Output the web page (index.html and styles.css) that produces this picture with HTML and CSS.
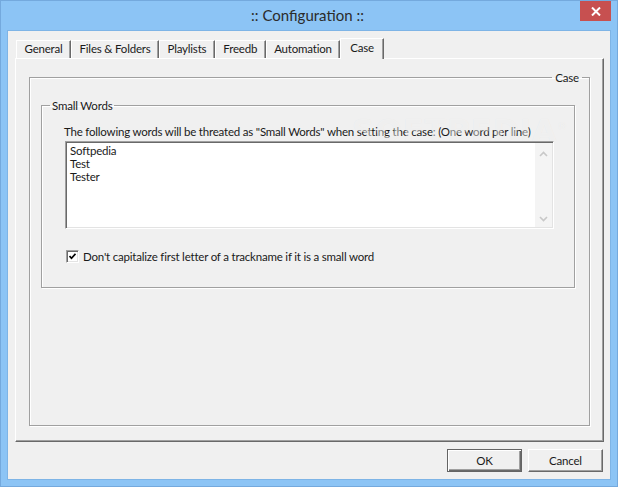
FILE: index.html
```html
<!DOCTYPE html>
<html>
<head>
<meta charset="utf-8">
<title>:: Configuration ::</title>
<link rel="stylesheet" href="styles.css">
</head>
<body>

<div class="window">

	<div class="titlebar">
		<div class="title">:: Configuration ::</div>
		<button type="button" class="close" title="Close">
			<svg width="10" height="9" viewBox="0 0 10 9"><path d="M1 0.5 L9 8.5 M9 0.5 L1 8.5" stroke="#fff" stroke-width="2" fill="none"/></svg>
		</button>
	</div>

	<div class="client">

		<div class="tabs">
			<div class="tab">General</div>
			<div class="tab">Files &amp; Folders</div>
			<div class="tab">Playlists</div>
			<div class="tab">Freedb</div>
			<div class="tab">Automation</div>
			<div class="tab active">Case</div>
		</div>

		<div class="panel">
			<fieldset class="group case_group">
				<legend class="legend_end">Case</legend>
				<div class="case_body">

					<fieldset class="group words_group">
						<legend>Small Words</legend>
						<div class="words_body">
							<p class="hint">The following words will be threated as "Small Words" when setting the case: (One word per line)</p>
							<div class="listbox">
								<textarea id="small_words" spellcheck="false">Softpedia
Test
Tester</textarea>
								<div class="vscroll">
									<svg width="9" height="6" viewBox="0 0 9 6"><path d="M1 5 L4.5 1.5 L8 5" stroke="#c8c8c8" stroke-width="1.6" fill="none"/></svg>
									<svg width="9" height="6" viewBox="0 0 9 6"><path d="M1 1 L4.5 4.5 L8 1" stroke="#c8c8c8" stroke-width="1.6" fill="none"/></svg>
								</div>
							</div>
							<label class="check">
								<span class="box"><svg width="7" height="7" viewBox="0 0 7 7"><path d="M0.5 3 L2.5 5.3 L6.5 0.8" stroke="#000" stroke-width="1.7" fill="none"/></svg></span>
								Don't capitalize first letter of a trackname if it is a small word
							</label>
						</div>
					</fieldset>

				</div>
			</fieldset>
		</div>

		<div class="buttons">
			<button type="button" class="btn default">OK</button>
			<button type="button" class="btn">Cancel</button>
		</div>

	</div>

	<div class="watermark">SOFTPEDIA<sup>®</sup></div>

</div>

</body>
</html>
```

FILE: styles.css
```css
body {
	margin: 0;
	font-family: Lato, "Noto Sans", sans-serif;
	font-size: 11.5px;
	letter-spacing: -0.2px;
	color: #1a1a1a;
}

.window {
	position: relative;
	width: 618px;
	height: 487px;
	box-sizing: border-box;
	display: flex;
	flex-direction: column;
	background: #8cc4f5;
	box-shadow: inset 0 0 0 1px #74a9dd;
}

/* title bar */

.titlebar {
	height: 31px;
	display: grid;
	grid-template-columns: 1fr auto 1fr;
	align-items: start;
}

.title {
	grid-column: 2;
	padding: 5px 3px 0 0;
	font-size: 15px;
	line-height: 20px;
	letter-spacing: 0;
	color: #2b2b2b;
}

.close {
	grid-column: 3;
	justify-self: end;
	display: flex;
	align-items: center;
	justify-content: center;
	width: 31px;
	height: 20px;
	margin: 1px 7px 0 0;
	padding: 0;
	border: 0;
	background: #c75050;
}

/* client area */

.client {
	flex: 1;
	display: flex;
	flex-direction: column;
	margin: 0 8px 8px;
	padding: 7px 6px 7px 7px;
	background: #f0f0f0;
	box-shadow: 0 0 0 1px #7eb4e6;
}

.tabs {
	position: relative;
	z-index: 1;
	display: flex;
	align-items: flex-end;
	height: 20px;
	padding-left: 1px;
}

.tab {
	height: 18px;
	box-sizing: border-box;
	padding: 0 7.5px;
	line-height: 16px;
	border: 1px solid;
	border-color: #fff #696969 transparent #fff;
	border-bottom: 0;
	box-shadow: inset -1px 0 #a0a0a0;
}

.tab.active {
	height: 21px;
	margin-bottom: -1px;
	padding: 0 9px;
	line-height: 17px;
	background: #f0f0f0;
}

.panel {
	flex: 1;
	display: flex;
	flex-direction: column;
	padding: 11px 13px 15px 13px;
	border: 1px solid;
	border-color: #fff #696969 #696969 #fff;
	box-shadow: inset -1px -1px #a0a0a0;
}

/* group boxes */

.group {
	margin: 0;
	padding: 0;
	min-width: 0;
	border: 1px solid #a0a0a0;
	box-shadow: inset 1px 1px #fff, 1px 1px #fff;
}

.group legend {
	padding: 0 3px;
	line-height: 15px;
}

.case_group {
	flex: 1;
}

.legend_end {
	margin-left: auto;
	margin-right: 7px;
}

.case_body {
	padding: 13px 14px 0 11px;
}

.words_group legend {
	margin-left: 8px;
	padding: 0 2px;
}

.words_body {
	padding: 11px 20px 23px 22px;
}

.hint {
	margin: 0;
	line-height: 15px;
	white-space: nowrap;
}

.listbox {
	display: flex;
	width: 489px;
	height: 88px;
	box-sizing: border-box;
	margin: 2px 0 0 1px;
	padding: 1px;
	background: #fff;
	border: 1px solid;
	border-color: #a0a0a0 #fff #fff #a0a0a0;
	box-shadow: inset 1px 1px #696969, inset -1px -1px #e3e3e3;
}

.listbox textarea {
	flex: 1;
	margin: 0;
	padding: 1px 3px;
	border: 0;
	outline: none;
	resize: none;
	overflow: hidden;
	background: transparent;
	font: inherit;
	letter-spacing: inherit;
	line-height: 13px;
	color: #1a1a1a;
}

.vscroll {
	width: 17px;
	display: flex;
	flex-direction: column;
	justify-content: space-between;
	align-items: center;
	padding: 8px 0 5px;
	box-sizing: border-box;
	background: #f4f4f4;
}

.check {
	display: flex;
	align-items: center;
	gap: 4px;
	margin: 20px 0 0 2px;
	line-height: 15px;
}

.box {
	display: flex;
	align-items: center;
	justify-content: center;
	width: 13px;
	height: 13px;
	box-sizing: border-box;
	background: #fff;
	border: 1px solid;
	border-color: #a0a0a0 #fff #fff #a0a0a0;
	box-shadow: inset 1px 1px #696969, inset -1px -1px #e3e3e3;
}

/* dialog buttons */

.buttons {
	display: flex;
	justify-content: flex-end;
	gap: 6px;
	margin-top: 7px;
	padding-right: 1px;
}

.btn {
	width: 75px;
	height: 23px;
	box-sizing: border-box;
	padding: 0;
	font: inherit;
	letter-spacing: inherit;
	color: #1a1a1a;
	background: #f0f0f0;
	border: 1px solid;
	border-color: #fff #696969 #696969 #fff;
	box-shadow: inset -1px -1px #a0a0a0;
}

.btn.default {
	border-color: #646464;
	box-shadow: inset 1px 1px #fff, inset -1px -1px #696969, inset -2px -2px #a0a0a0;
}

.watermark {
	position: absolute;
	left: 352px;
	top: 112px;
	font-family: "DejaVu Sans", sans-serif;
	font-size: 31px;
	font-weight: bold;
	letter-spacing: 1px;
	color: rgba(255, 255, 255, 0.45);
	text-shadow: 0 0 1px rgba(0, 0, 0, 0.05);
	pointer-events: none;
}

.watermark sup {
	font-size: 10px;
	font-weight: normal;
}
```
